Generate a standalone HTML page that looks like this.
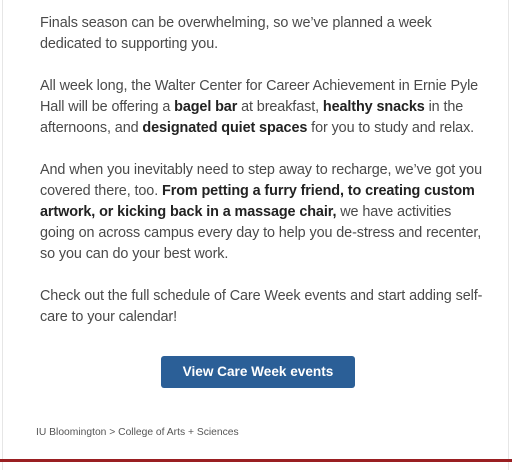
<!DOCTYPE html>
<html><head><style>
html,body{margin:0;padding:0;width:512px;height:470px;background:#fff;overflow:hidden}
.wrap{position:absolute;left:2px;top:0;width:507px;height:470px;border-left:1px solid #e6e6e6;border-right:1px solid #e6e6e6;box-sizing:border-box}
.t{position:absolute;left:40px;font-family:"Liberation Sans",sans-serif;font-size:14.4px;line-height:21px;color:#4a4a4a;white-space:nowrap;letter-spacing:-0.1px}
b{color:#222}
.btn{position:absolute;left:161px;top:356px;width:194px;height:32px;background:#2b5f97;border-radius:3px;color:#fff;font-family:"Liberation Sans",sans-serif;font-weight:bold;font-size:13.6px;text-align:center;line-height:32px}
.foot{position:absolute;left:36px;top:427px;font-family:"Liberation Sans",sans-serif;font-size:10.3px;color:#555}
.red{position:absolute;left:0;top:459px;width:512px;height:3px;background:#9a1f22}
</style></head><body>
<div class="wrap"></div>
<div class="t" style="top:13px">Finals season can be overwhelming, so we’ve planned a week<br>dedicated to supporting you.</div>
<div class="t" style="top:76px">All week long, the Walter Center for Career Achievement in Ernie Pyle<br>Hall will be offering a <b>bagel bar</b> at breakfast, <b>healthy snacks</b> in the<br>afternoons, and <b>designated quiet spaces</b> for you to study and relax.</div>
<div class="t" style="top:160px">And when you inevitably need to step away to recharge, we’ve got you<br>covered there, too. <b>From petting a furry friend, to creating custom<br>artwork, or kicking back in a massage chair,</b> we have activities<br>going on across campus every day to help you de-stress and recenter,<br>so you can do your best work.</div>
<div class="t" style="top:286px">Check out the full schedule of Care Week events and start adding self-<br>care to your calendar!</div>
<div class="btn">View Care Week events</div>
<div class="foot">IU Bloomington &gt; College of Arts + Sciences</div>
<div class="red"></div>
</body></html>
